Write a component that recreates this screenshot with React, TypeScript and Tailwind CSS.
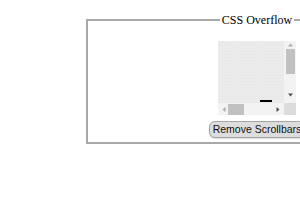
import React from "react";

function ScrollBox() {
  return (
    <div className="mx-auto w-[78px] h-[74px] grid grid-cols-[66px_12px] grid-rows-[62px_12px] bg-[#f1f1f1]">
      <div className="relative bg-[#ebebeb] bg-[radial-gradient(#e5e5e5_0.5px,transparent_0.7px)] bg-[length:3px_3px]">
        <div className="absolute left-[42px] bottom-[1px] w-[12px] h-[2px] bg-black" />
      </div>
      <div className="flex flex-col items-center bg-[#f3f3f3]">
        <svg width="7" height="6" viewBox="0 0 7 6" className="mt-[1px]">
          <path d="M1 4.5 L3.5 1.5 L6 4.5 Z" fill="#a8a8a8" />
        </svg>
        <div className="mt-[1px] w-[9px] h-[25px] bg-[#c1c1c1]" />
        <div className="flex-1" />
        <svg width="7" height="6" viewBox="0 0 7 6" className="mb-[5px]">
          <path d="M1 1.5 L3.5 4.5 L6 1.5 Z" fill="#505050" />
        </svg>
      </div>
      <div className="flex items-center bg-[#f3f3f3]">
        <svg width="6" height="7" viewBox="0 0 6 7" className="ml-[3px]">
          <path d="M4.5 1 L1.5 3.5 L4.5 6 Z" fill="#a8a8a8" />
        </svg>
        <div className="ml-[1px] w-[16px] h-[11px] bg-[#c1c1c1]" />
        <div className="flex-1" />
        <svg width="6" height="7" viewBox="0 0 6 7" className="mr-[3px]">
          <path d="M1.5 1 L4.5 3.5 L1.5 6 Z" fill="#505050" />
        </svg>
      </div>
      <div className="bg-[#dcdcdc]" />
    </div>
  );
}

export default function App() {
  return (
    <div className="w-[300px] h-[210px] overflow-hidden bg-white pt-[13px] pl-[86px]">
      <fieldset className="m-0 w-[342px] border-2 border-solid border-[#a9a9a9] px-0 pt-0 pb-[4px] text-center">
        <legend className="mx-auto px-[2px] font-['Liberation_Serif',serif] text-[12px] leading-[14px] text-black">
          CSS Overflow
        </legend>
        <div className="mt-[14px]">
          <ScrollBox />
        </div>
        <div className="mt-[6px] flex justify-center">
          <button className="h-[17px] px-[3px] rounded-[6px] border border-[#a6a6a6] bg-[#dddddd] shadow-[0_1px_1px_rgba(0,0,0,0.15)] font-['Liberation_Sans',sans-serif] text-[10.5px] leading-[15px] text-[#111]">
            Remove Scrollbars
          </button>
        </div>
      </fieldset>
    </div>
  );
}
